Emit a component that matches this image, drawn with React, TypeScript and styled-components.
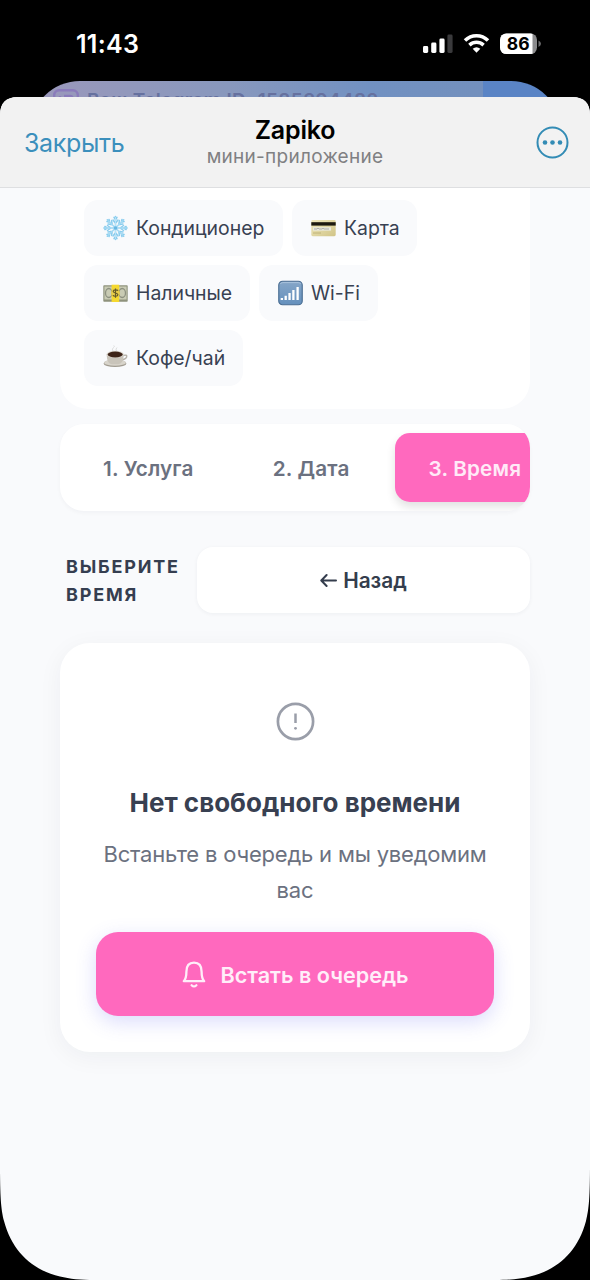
import React from 'react';
import styled, { createGlobalStyle, css } from 'styled-components';

const Global = createGlobalStyle`
  * { box-sizing: border-box; }
  body { margin: 0; background: #000; font-family: Inter, "Liberation Sans", sans-serif; }
  button { font-family: inherit; border: 0; margin: 0; padding: 0; }
`;

const Phone = styled.div`
  width: 590px;
  height: 1280px;
  overflow: hidden;
  background: #000;
  display: flex;
  flex-direction: column;
`;

const StatusBar = styled.div`
  height: 81px;
  flex: none;
  display: flex;
  align-items: center;
  justify-content: space-between;
  padding: 7px 49px 0 76px;
`;

const Clock = styled.span`
  color: #fff;
  font-size: 25px;
  font-weight: 600;
  letter-spacing: 0.3px;
`;

const StatusIcons = styled.svg`
  display: block;
  width: 118px;
  height: 24px;
`;

const BehindPage = styled.div`
  flex: none;
  height: 16px;
  margin: 0 29px 0 30px;
  overflow: hidden;
`;

const BehindContent = styled.div`
  height: 100px;
  border-radius: 50px;
  overflow: hidden;
  display: flex;
  gap: 8px;
  padding: 8px 0 0 23px;
  font-size: 19px;
  line-height: 24px;
  font-weight: 600;
  white-space: nowrap;
  letter-spacing: 0.35px;
  color: #66719f;
  background: linear-gradient(90deg, transparent 453px, #5a84c5 453px),
    linear-gradient(90deg, #9b98bb 0, #8898bd 200px, #7191c2 340px, #7390bd 453px);
`;

const Sheet = styled.main`
  flex: 1;
  display: flex;
  flex-direction: column;
  background: #f9fafc;
  clip-path: path("M0 18 Q0 0 18 0 H572 Q590 0 590 18 V1066 C590 1100 589 1112 586 1124 C578 1154 558 1173 530 1179.5 C520 1182 510 1183 495 1183 H95 C80 1183 70 1182 60 1179.5 C32 1173 12 1154 4 1124 C1 1112 0 1100 0 1066 Z");
`;

const Header = styled.header`
  flex: none;
  height: 91px;
  display: grid;
  grid-template-columns: 1fr auto 1fr;
  align-items: center;
  padding: 1px 21px 0 24px;
  background: #f2f2f2;
  border-bottom: 1px solid #dedfe1;
`;

const CloseButton = styled.button`
  justify-self: start;
  background: none;
  color: #3b8fbc;
  font-size: 25px;
  line-height: 30px;
  letter-spacing: -0.35px;
`;

const TitleBlock = styled.div`
  text-align: center;
  transform: translateX(-1.5px);
`;

const AppTitle = styled.h1`
  margin: 0;
  font-size: 25px;
  line-height: 28px;
  font-weight: 600;
  letter-spacing: -0.2px;
  color: #000;
`;

const AppSubtitle = styled.div`
  font-size: 19px;
  line-height: 26px;
  letter-spacing: 0.27px;
  color: #808082;
`;

const MoreButton = styled.button`
  justify-self: end;
  display: flex;
  background: none;
  color: #338cb5;
`;

const Content = styled.div`
  padding: 0 60px;
  display: flex;
  flex-direction: column;
`;

const Amenities = styled.section`
  display: flex;
  flex-wrap: wrap;
  gap: 9px;
  height: 221px;
  align-content: flex-start;
  padding: 12px 24px 0;
  background: #fff;
  border-radius: 0 0 28px 28px;
`;

const Chip = styled.div<{ $w: number }>`
  width: ${p => p.$w}px;
  height: 56px;
  display: flex;
  align-items: center;
  gap: 8px;
  padding-left: 19px;
  border-radius: 14px;
  background: #f9fafc;
  color: #384152;
  font-size: 19.4px;
  white-space: nowrap;
  svg { flex: none; }
`;

const Steps = styled.nav`
  display: flex;
  gap: 11px;
  height: 87px;
  margin-top: 15px;
  padding: 9px;
  overflow: hidden;
  background: #fff;
  border-radius: 24px;
  box-shadow: 0 2px 4px rgba(20, 30, 50, 0.035);
`;

const Step = styled.button<{ $active?: boolean }>`
  flex: none;
  height: 69px;
  padding: 1px 34px 0;
  border-radius: 15px;
  background: transparent;
  color: #6b7180;
  font-size: 20.7px;
  font-weight: 600;
  letter-spacing: 0.17px;
  ${p => p.$active && css`
    background: #ff69be;
    color: #ffeaf7;
    box-shadow: 0 5px 10px rgba(0, 0, 0, 0.12);
  `}
`;

const TimeHeading = styled.div`
  display: flex;
  align-items: center;
  justify-content: space-between;
  height: 66px;
  margin-top: 36px;
  padding-left: 6px;
`;

const SectionTitle = styled.h2`
  margin: 2px 0 0;
  width: 125px;
  font-size: 18px;
  line-height: 28.5px;
  font-weight: 700;
  letter-spacing: 1.8px;
  text-transform: uppercase;
  color: #353e50;
`;

const BackButton = styled.button`
  width: 333px;
  height: 66px;
  display: flex;
  align-items: center;
  justify-content: center;
  gap: 6px;
  border-radius: 16px;
  background: #fff;
  color: #343d4d;
  font-size: 20.8px;
  font-weight: 600;
  box-shadow: 0 1px 4px rgba(20, 30, 50, 0.05);
`;

const EmptyCard = styled.section`
  height: 409px;
  margin-top: 30px;
  padding: 56px 36px 36px;
  display: flex;
  flex-direction: column;
  align-items: center;
  text-align: center;
  background: #fff;
  border-radius: 30px;
  box-shadow: 0 5px 24px rgba(20, 30, 50, 0.05);
`;

const EmptyTitle = styled.h3`
  margin: 42px 0 0;
  font-size: 26px;
  line-height: 36px;
  font-weight: 700;
  white-space: nowrap;
  color: #384051;
`;

const EmptyText = styled.p`
  margin: 15px 0 0;
  font-size: 22px;
  line-height: 36px;
  letter-spacing: -0.2px;
  color: #6b7180;
`;

const QueueButton = styled.button`
  width: 100%;
  height: 84px;
  margin-top: auto;
  padding-top: 1px;
  display: flex;
  align-items: center;
  justify-content: center;
  gap: 13px;
  border-radius: 22px;
  background: #ff69be;
  color: #ffeef9;
  font-size: 21.6px;
  font-weight: 600;
  box-shadow: 0 6px 20px rgba(90, 95, 240, 0.22);
`;

const SnowIcon = () => (
  <svg width="25" height="26" viewBox="0 0 25 26" fill="none" strokeLinecap="round">
    {[0, 45, 90, 135, 180, 225, 270, 315].map(a => (
      <g key={a} transform={`rotate(${a} 12.5 13)`}>
        <path d="M12.5 12V1.4M12.5 8.4L10 5M12.5 8.4L15 5M12.5 4.8L11 2.4M12.5 4.8L14 2.4" stroke="#8bcdee" strokeWidth="1.5" />
        <path d="M12.5 12V2.5" stroke="#c8ebfa" strokeWidth=".7" />
      </g>
    ))}
    <circle cx="12.5" cy="13" r="1.8" fill="#68b8e4" />
  </svg>
);

const CardIcon = () => (
  <svg width="25" height="26" viewBox="0 0 25 26">
    <defs>
      <linearGradient id="gold" x1="0" y1="0" x2="1" y2="1">
        <stop offset="0" stopColor="#efe8bd" /><stop offset="1" stopColor="#d1c487" />
      </linearGradient>
    </defs>
    <rect x=".3" y="5" width="24.4" height="16.2" rx="1.4" fill="url(#gold)" />
    <rect x=".3" y="7.2" width="24.4" height="3.4" fill="#1c1910" />
    <rect x="2" y="12.2" width="18" height="3.4" fill="#e9e9df" />
    <path d="M3 14h3l1-1 1 1h3l1-.8 1 .8h5" stroke="#95968f" strokeWidth=".7" fill="none" />
    <path d="M2 18h8" stroke="#b8ab70" strokeWidth=".8" />
  </svg>
);

const CashIcon = () => (
  <svg width="25" height="26" viewBox="0 0 25 26">
    <rect x=".3" y="5.3" width="24.4" height="16.4" rx=".8" fill="#8f927c" />
    <rect x="1.4" y="6.5" width="22.2" height="13" fill="#c9cbb4" />
    <ellipse cx="5.8" cy="13" rx="3.3" ry="4.5" fill="none" stroke="#8d9180" strokeWidth="1.3" />
    <ellipse cx="19.2" cy="13" rx="3.3" ry="4.5" fill="none" stroke="#8d9180" strokeWidth="1.3" />
    <rect x="8.6" y="4.7" width="7.6" height="17.3" fill="#f5d830" />
    <circle cx="12.5" cy="13" r="4.4" fill="#e8cc49" />
    <path d="M15 10.8C14.5 9.7 10.4 9.3 10.2 11.4C10 13.5 15 12.5 14.9 14.8C14.7 16.7 10.5 16.7 10 15.1M12.5 8.5V17.7" fill="none" stroke="#655b28" strokeWidth="1.2" />
  </svg>
);

const SignalIcon = () => (
  <svg width="25" height="26" viewBox="0 0 26 26">
    <defs>
      <linearGradient id="blue" x1="0" y1="0" x2="0" y2="1">
        <stop offset="0" stopColor="#86a6c8" /><stop offset="1" stopColor="#6590bd" />
      </linearGradient>
    </defs>
    <rect x=".8" y=".8" width="24.4" height="24.4" rx="4" fill="url(#blue)" stroke="#4b6e93" strokeWidth="1.2" />
    <path d="M2.5 3.5Q3 2.2 5 2.2H21Q23 2.2 23.5 3.5" fill="none" stroke="#b5cce4" strokeWidth=".8" />
    <path d="M4 18.2v2M8 15.8v4.4M12 13v7.2M16 10v10.2M20.4 6.8v13.4" stroke="#fff" strokeWidth="2.4" />
  </svg>
);

const CoffeeIcon = () => (
  <svg width="25" height="26" viewBox="0 0 25 26">
    <ellipse cx="12" cy="18.4" rx="11.4" ry="3.6" fill="#a19b90" />
    <ellipse cx="12" cy="17.7" rx="11" ry="3" fill="#d8d4cb" />
    <path d="M20 10.5Q24.5 9.3 23.6 12Q22.6 14.6 18.5 14.7" fill="none" stroke="#b5b0a7" strokeWidth="1.5" />
    <path d="M3.6 9.5Q4 18.8 9 19.2H15Q20.4 18.8 20.8 9.5Z" fill="#c9c4ba" />
    <ellipse cx="12.2" cy="9.3" rx="8.6" ry="3.6" fill="#dedad2" />
    <ellipse cx="12.2" cy="9.5" rx="7.6" ry="2.9" fill="#3e2418" />
    <path d="M10 6Q8.5 4 10.5 2.5T10.5 .3M13.5 6Q12.3 4 14 2.5" fill="none" stroke="#dedede" strokeWidth="1" />
  </svg>
);

const chips = [
  { label: 'Кондиционер', w: 199, icon: <SnowIcon /> },
  { label: 'Карта', w: 125, icon: <CardIcon /> },
  { label: 'Наличные', w: 166, icon: <CashIcon /> },
  { label: 'Wi-Fi', w: 119, icon: <SignalIcon /> },
  { label: 'Кофе/чай', w: 159, icon: <CoffeeIcon /> },
];

export default function App() {
  return (
    <Phone>
      <Global />
      <StatusBar>
        <Clock>11:43</Clock>
        <StatusIcons viewBox="0 0 118 24">
          <g fill="#fff">
            <rect x="0" y="14" width="5.2" height="7" rx="1.4" />
            <rect x="8.2" y="10.5" width="5.2" height="10.5" rx="1.4" />
            <rect x="16.4" y="6.5" width="5.2" height="14.5" rx="1.4" />
            <rect x="24.4" y="2.5" width="5.2" height="18.5" rx="1.4" fill="#3a3a3c" />
          </g>
          <g fill="none" stroke="#fff" strokeWidth="3.5">
            <path d="M42 8.6C48.5 2.1 58.5 2.1 65 8.6" />
            <path d="M46.4 13.1C50.6 9.3 56.4 9.3 60.6 13.1" />
          </g>
          <path d="M49.7 16.8Q53.5 13.7 57.3 16.8L53.5 20.8Z" fill="#fff" />
          <clipPath id="battery"><rect x="77" y="1.4" width="37" height="20.6" rx="6.4" /></clipPath>
          <g clipPath="url(#battery)">
            <rect x="77" y="1" width="37" height="22" fill="#8b8b8d" />
            <rect x="77" y="1" width="32.5" height="22" fill="#fff" />
          </g>
          <path d="M115.5 8.4Q118 9.6 118 11.7T115.5 15Z" fill="#6b6b6d" />
          <text x="95.2" y="18.2" textAnchor="middle" fontFamily="Inter" fontSize="17.5" fontWeight="700" fill="#000">86</text>
        </StatusIcons>
      </StatusBar>
      <BehindPage>
        <BehindContent>
          <svg width="26" height="26" viewBox="0 0 26 26" fill="none" stroke="#8a7bbb" strokeWidth="2.4">
            <rect x="1.2" y="1.2" width="23.6" height="23.6" rx="5" />
            <path d="M7 19V7M11 7h6q3 0 3 4" />
          </svg>
          <span>Ваш Telegram ID: 1585394482</span>
        </BehindContent>
      </BehindPage>
      <Sheet>
        <Header>
          <CloseButton>Закрыть</CloseButton>
          <TitleBlock>
            <AppTitle>Zapiko</AppTitle>
            <AppSubtitle>мини-приложение</AppSubtitle>
          </TitleBlock>
          <MoreButton aria-label="Меню">
            <svg width="33" height="33" viewBox="0 0 33 33">
              <circle cx="16.5" cy="16.5" r="15" fill="none" stroke="currentColor" strokeWidth="2" />
              <g fill="currentColor">
                <circle cx="9" cy="16.5" r="2.3" />
                <circle cx="16.5" cy="16.5" r="2.3" />
                <circle cx="24" cy="16.5" r="2.3" />
              </g>
            </svg>
          </MoreButton>
        </Header>
        <Content>
          <Amenities>
            {chips.map(c => <Chip key={c.label} $w={c.w}>{c.icon}<span>{c.label}</span></Chip>)}
          </Amenities>
          <Steps>
            <Step>1. Услуга</Step>
            <Step>2. Дата</Step>
            <Step $active>3. Время</Step>
          </Steps>
          <TimeHeading>
            <SectionTitle>Выберите время</SectionTitle>
            <BackButton>
              <svg width="17" height="16" viewBox="0 0 17 16" fill="none" stroke="currentColor" strokeWidth="2" strokeLinecap="round" strokeLinejoin="round">
                <path d="M16 8.5H1.5M6.6 3L1.3 8.5L6.6 14" />
              </svg>
              Назад
            </BackButton>
          </TimeHeading>
          <EmptyCard>
            <svg width="44" height="44" viewBox="0 0 44 44" fill="none" stroke="#9a9ea9">
              <circle cx="22.5" cy="22.5" r="17.6" strokeWidth="2.7" />
              <path d="M22.5 14.5V24" strokeWidth="2.5" />
              <circle cx="22.5" cy="29.3" r="1.4" fill="#9a9ea9" stroke="none" />
            </svg>
            <EmptyTitle>Нет свободного времени</EmptyTitle>
            <EmptyText>Встаньте в очередь и мы уведомим вас</EmptyText>
            <QueueButton>
              <svg width="26" height="28" viewBox="0 0 26 28" fill="none" stroke="currentColor" strokeWidth="2.3" strokeLinecap="round" strokeLinejoin="round">
                <path d="M2.8 20.2C4.8 18 5.4 15.5 5.4 10.7C5.4 5 8.3 1.7 13 1.7S20.6 5 20.6 10.7C20.6 15.5 21.2 18 23.2 20.2Z" />
                <path d="M10.6 24.2Q13 26.6 15.4 24.2" />
              </svg>
              Встать в очередь
            </QueueButton>
          </EmptyCard>
        </Content>
      </Sheet>
    </Phone>
  );
}
